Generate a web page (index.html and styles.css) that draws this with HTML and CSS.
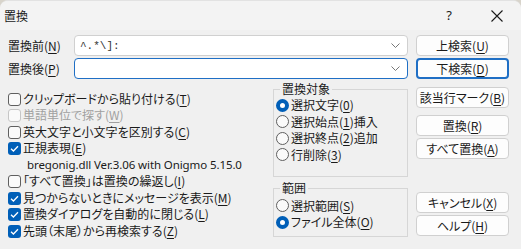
FILE: index.html
```html
<!DOCTYPE html>
<html lang="ja">
<head>
  <meta charset="UTF-8" />
  <title>置換</title>
  <link rel="stylesheet" href="styles.css">
</head>
<body>
  <div class="window">
    <div class="titlebar">
      <span class="title">置換</span>
      <span class="help">?</span>
      <svg class="close" width="12" height="12" viewBox="0 0 12 12">
        <path d="M0.5 0.5 L11.5 11.5 M11.5 0.5 L0.5 11.5" stroke="#1a1a1a" stroke-width="1.1" fill="none" />
      </svg>
    </div>

    <div class="fields">
      <span class="field-label">置換前(<u>N</u>)</span>
      <div class="combo">
        <span class="combo-text">^.*\]:</span>
        <svg class="chevron" width="9" height="5" viewBox="0 0 9 5"><path d="M0.5 0.5 L4.5 4.5 L8.5 0.5" stroke="#777" fill="none" /></svg>
      </div>
      <button class="btn">上検索(<u>U</u>)</button>

      <span class="field-label">置換後(<u>P</u>)</span>
      <div class="combo focused">
        <span class="combo-text"></span>
        <svg class="chevron" width="9" height="5" viewBox="0 0 9 5"><path d="M0.5 0.5 L4.5 4.5 L8.5 0.5" stroke="#777" fill="none" /></svg>
      </div>
      <button class="btn default">下検索(<u>D</u>)</button>
    </div>

    <div class="lower">
      <div class="options">
        <div class="check"><span class="box"></span>クリップボードから貼り付ける(<u>T</u>)</div>
        <div class="check disabled"><span class="box"></span>単語単位で探す(<u>W</u>)</div>
        <div class="check"><span class="box"></span>英大文字と小文字を区別する(<u>C</u>)</div>
        <div class="check on"><span class="box"></span>正規表現(<u>E</u>)</div>
        <div class="note">bregonig.dll Ver.3.06 with Onigmo 5.15.0</div>
        <div class="check"><span class="box"></span>「すべて置換」は置換の繰返し(<u>I</u>)</div>
        <div class="check on"><span class="box"></span>見つからないときにメッセージを表示(<u>M</u>)</div>
        <div class="check on"><span class="box"></span>置換ダイアログを自動的に閉じる(<u>L</u>)</div>
        <div class="check on"><span class="box"></span>先頭（末尾）から再検索する(<u>Z</u>)</div>
      </div>

      <div class="groups">
        <fieldset class="group target">
          <legend>置換対象</legend>
          <div class="radio on"><span class="dot"></span>選択文字(<u>0</u>)</div>
          <div class="radio"><span class="dot"></span>選択始点(<u>1</u>)挿入</div>
          <div class="radio"><span class="dot"></span>選択終点(<u>2</u>)追加</div>
          <div class="radio"><span class="dot"></span>行削除(<u>3</u>)</div>
        </fieldset>
        <fieldset class="group range">
          <legend>範囲</legend>
          <div class="radio"><span class="dot"></span>選択範囲(<u>S</u>)</div>
          <div class="radio on"><span class="dot"></span>ファイル全体(<u>O</u>)</div>
        </fieldset>
      </div>

      <div class="actions">
        <button class="btn">該当行マーク(<u>B</u>)</button>
        <button class="btn gap-sm">置換(<u>R</u>)</button>
        <button class="btn">すべて置換(<u>A</u>)</button>
        <button class="btn gap-lg">キャンセル(<u>X</u>)</button>
        <button class="btn">ヘルプ(<u>H</u>)</button>
      </div>
    </div>
  </div>
</body>
</html>
```

FILE: styles.css
```css
html, body {
  margin: 0;
  padding: 0;
}
body {
  background-color: #d8d4cb;
  font-family: "Noto Sans CJK JP", "Noto Sans", sans-serif;
  font-size: 12px;
  color: #1a1a1a;
  font-feature-settings: "palt";
}
u {
  text-decoration-thickness: 1px;
  text-underline-offset: 2px;
}
.window {
  width: 521px;
  height: 249px;
  background-color: #f0f0f0;
  border-radius: 8px 8px 0 0;
  box-sizing: border-box;
  border-top: 1px solid #e2e2e2;
  overflow: hidden;
}
.titlebar {
  height: 29px;
  display: flex;
  align-items: center;
  padding: 0 18px 0 4px;
  background-color: #f3f3f3;
}
.title {
  flex: 1;
  font-size: 12px;
}
.help {
  font-family: "Noto Sans", sans-serif;
  font-size: 13px;
  margin-right: 39px;
  margin-top: -1px;
}
.close {
  display: block;
}
.fields {
  display: grid;
  grid-template-columns: 58px 334px 93px;
  grid-auto-rows: 21px;
  column-gap: 8px;
  row-gap: 2px;
  padding: 5px 0 0 8px;
  align-items: center;
}
.field-label {
  line-height: 16px;
  white-space: nowrap;
}
.combo {
  height: 21px;
  box-sizing: border-box;
  background-color: #fff;
  border: 1px solid #d0d0d0;
  border-radius: 4px;
  display: flex;
  align-items: center;
  padding: 0 7px 0 5px;
}
.combo.focused {
  border-color: #1f6fc5;
}
.combo-text {
  flex: 1;
  font-family: "Liberation Mono", monospace;
  font-size: 11px;
  color: #333;
}
.chevron {
  display: block;
}
.btn {
  width: 93px;
  height: 21px;
  box-sizing: border-box;
  padding: 0;
  background-color: #fdfdfd;
  border: 1px solid #d0d0d0;
  border-radius: 4px;
  font-family: inherit;
  font-size: 12px;
  font-feature-settings: "palt";
  color: #1a1a1a;
  line-height: 16px;
}
.btn.default {
  border: 2px solid #1f6fc5;
}
.lower {
  display: flex;
  margin-top: 2px;
  padding-left: 8px;
}
.options {
  width: 265px;
  padding-top: 9.75px;
}
.check, .radio {
  height: 16.5px;
  line-height: 16.5px;
  display: flex;
  align-items: center;
  white-space: nowrap;
}
.box {
  width: 13px;
  height: 13px;
  box-sizing: border-box;
  border: 1px solid #5f5f5f;
  border-radius: 3px;
  background-color: #fafafa;
  margin-right: 2px;
  flex-shrink: 0;
}
.check.disabled {
  color: #a0a0a0;
}
.check.disabled .box {
  border-color: #c6c6c6;
}
.check.on .box {
  border: none;
  background: #005fb8 url("data:image/svg+xml,%3Csvg xmlns='http://www.w3.org/2000/svg' width='13' height='13'%3E%3Cpath d='M3 6.8 L5.4 9 L10 4.2' stroke='white' stroke-width='1.3' fill='none'/%3E%3C/svg%3E") no-repeat center;
}
.note {
  height: 16.5px;
  line-height: 16.5px;
  padding-left: 19px;
  font-family: "Noto Sans", sans-serif;
  font-size: 11.5px;
  letter-spacing: -0.1px;
}
.groups {
  width: 135px;
}
.group {
  margin: 0;
  border: 1px solid #d6d6d6;
  padding: 0 0 13px 2px;
}
.group legend {
  line-height: 16px;
  padding: 0 2px;
  margin-left: 4px;
}
.group.range {
  margin-top: 3px;
  padding-top: 1.5px;
  padding-bottom: 5px;
}
.dot {
  width: 13px;
  height: 13px;
  box-sizing: border-box;
  border: 1px solid #5f5f5f;
  border-radius: 50%;
  background-color: #fafafa;
  margin-right: 2px;
  flex-shrink: 0;
}
.radio.on .dot {
  border: 4px solid #005fb8;
  background-color: #fff;
}
.actions {
  display: flex;
  flex-direction: column;
  gap: 2px;
  margin-left: 8px;
  padding-top: 6px;
}
.actions .gap-sm {
  margin-top: 5px;
}
.actions .gap-lg {
  margin-top: 31px;
}
```
